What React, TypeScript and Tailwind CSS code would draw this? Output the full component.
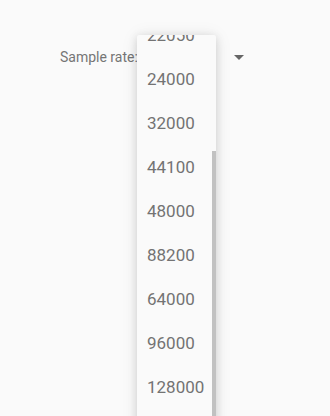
import React from "react";

const rates = ["22050", "24000", "32000", "44100", "48000", "88200", "64000", "96000", "128000"];

export default function App() {
  return (
    <div
      className="relative w-[330px] h-[416px] overflow-hidden bg-[#fafafa]"
      style={{ fontFamily: "Roboto, 'Liberation Sans', sans-serif" }}
    >
      <div className="flex items-center pl-[60px] pt-[47px]">
        <span className="text-[14px] leading-[20px] text-[#757575]">Sample rate:</span>
        <div className="ml-[96px] flex items-center">
          <svg width="10" height="5" viewBox="0 0 10 5" className="block mt-[1px]">
            <path d="M0 0 L10 0 L5 5 Z" fill="#666666" />
          </svg>
        </div>
      </div>

      <div className="absolute left-[137px] top-[35px] w-[79px] h-[400px] rounded-[2px] bg-[#fafafa] overflow-hidden shadow-[0_2px_10px_rgba(0,0,0,0.14),0_1px_18px_rgba(0,0,0,0.08)]">
        <div className="-mt-[22px] flex flex-col">
          {rates.map((r) => (
            <div
              key={r}
              className="h-[44px] flex items-center pl-[10px] text-[17px] leading-[20px] text-[#737373] whitespace-nowrap"
            >
              {r}
            </div>
          ))}
        </div>
        <div className="absolute right-0 top-[116px] w-[4px] h-[300px] bg-[#c1c1c1]" />
      </div>
    </div>
  );
}
